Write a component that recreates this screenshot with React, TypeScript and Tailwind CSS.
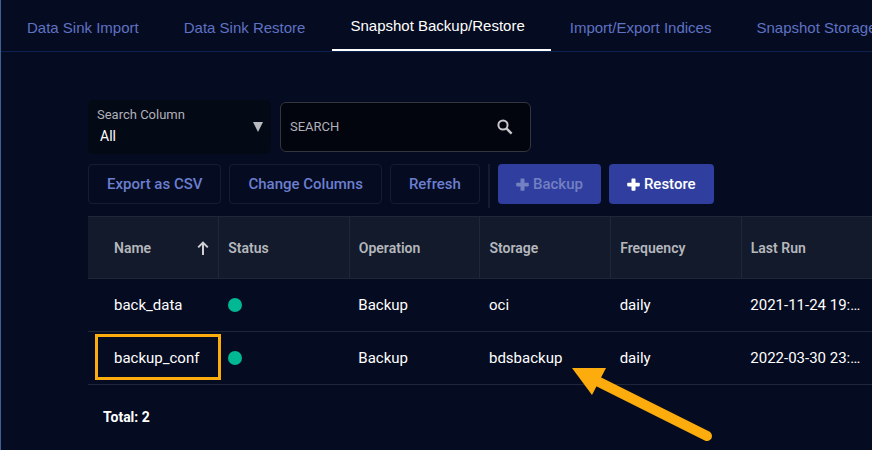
import { useState } from "react"

const tabs = [
    'Data Sink Import',
    'Data Sink Restore',
    'Snapshot Backup/Restore',
    'Import/Export Indices',
    'Snapshot Storage',
]

const columns = ['Name', 'Status', 'Operation', 'Storage', 'Frequency', 'Last Run']

const jobs = [
    { name: 'back_data', operation: 'Backup', storage: 'oci', frequency: 'daily', lastRun: '2021-11-24 19:30:00', marked: false },
    { name: 'backup_conf', operation: 'Backup', storage: 'bdsbackup', frequency: 'daily', lastRun: '2022-03-30 23:30:00', marked: true },
]

function PlusIcon() {
    return (
        <svg width="13" height="13" viewBox="0 0 13 13" fill="currentColor">
            <path d="M5.3 0.5 H7.7 Q8.5 0.5 8.5 1.3 V4.8 H12 Q12.8 4.8 12.8 5.6 V7.6 Q12.8 8.4 12 8.4 H8.5 V11.9 Q8.5 12.7 7.7 12.7 H5.3 Q4.5 12.7 4.5 11.9 V8.4 H1 Q0.2 8.4 0.2 7.6 V5.6 Q0.2 4.8 1 4.8 H4.5 V1.3 Q4.5 0.5 5.3 0.5 Z" />
        </svg>
    )
}

function SearchIcon() {
    return (
        <svg width="16" height="16" viewBox="0 0 16 16" fill="none" stroke="#c8c8cc" strokeWidth="2">
            <circle cx="6" cy="6" r="4.6" />
            <path d="M9.4 9.4 L14.6 14.6" strokeWidth="2.4" />
        </svg>
    )
}

function SortIcon() {
    return (
        <svg width="12" height="14" viewBox="0 0 12 14" fill="none" stroke="#d0d0d3" strokeWidth="2">
            <path d="M6 14 V2 M1.2 6.4 L6 1.6 L10.8 6.4" />
        </svg>
    )
}

function PointerArrow() {
    return (
        <svg className="pointer-events-none absolute top-9 left-[91px] z-10" width="144" height="76" viewBox="0 0 144 76" fill="none">
            <path d="M26 13 L136 68" stroke="#fcac0c" strokeWidth="10" strokeLinecap="round" />
            <path d="M1 0 H35 L21 27 Z" fill="#fcac0c" />
        </svg>
    )
}

export default function App() {
    const [activeTab, setActiveTab] = useState('Snapshot Backup/Restore')
    const [search, setSearch] = useState('')

    const outlineButton = 'h-10 rounded border border-[#161c33] px-[18px] text-[#6b7fd0] hover:bg-[#10162e]'
    const solidButton = 'flex h-10 items-center gap-1 rounded bg-[#303f9f] px-[18px]'

    return (
        <div className="min-h-screen overflow-x-clip border-l border-[#3f5f95] bg-[#050b20] font-['Roboto',sans-serif] text-white">
            <nav className="flex h-[52px] overflow-hidden border-b border-[#0d2150] pl-2 font-['Liberation_Sans',sans-serif] whitespace-nowrap">
                <div className="flex gap-px">
                    {tabs.map(t => (
                        <button
                            key={t}
                            type="button"
                            onClick={() => setActiveTab(t)}
                            className={`${activeTab === t ? 'border-b-[3px] border-white text-white' : 'text-[#5f72c4]'} h-[52px] shrink-0 pt-1 pr-[26px] pl-[18px] text-[15px]`}
                        >
                            {t}
                        </button>
                    ))}
                </div>
            </nav>

            <main className="pt-12 pl-[87px]">
                <div className="flex items-center gap-[9px]">
                    <div className="relative h-[54px] w-[183px] rounded-md bg-[#040916] pt-1">
                        <label htmlFor="column" className="block pl-[9px] text-[13px] leading-[22px] text-[#b0b1b8]">Search Column</label>
                        <select id="column" className="block w-full appearance-none bg-transparent pl-3 text-sm text-white outline-none">
                            <option>All</option>
                        </select>
                        <svg className="pointer-events-none absolute top-[22px] right-2" width="10" height="10" viewBox="0 0 10 10">
                            <path d="M0 0 H10 L5 10 Z" fill="#b9bac0" />
                        </svg>
                    </div>
                    <div className="flex h-[50px] w-[251px] items-center rounded-md border border-[#33353f] bg-[#02040e] pr-[17px] pl-[9px]">
                        <input
                            aria-label="Search"
                            placeholder="SEARCH"
                            value={search}
                            onChange={(e) => setSearch(e.target.value)}
                            className="min-w-0 flex-1 bg-transparent text-[13px] outline-none placeholder:text-[#b0b1b8]"
                        />
                        <SearchIcon />
                    </div>
                </div>

                <div className="mt-[10px] flex text-[15px] font-medium whitespace-nowrap">
                    <div className="flex gap-2">
                        <button type="button" className={outlineButton}>Export as CSV</button>
                        <button type="button" className={outlineButton}>Change Columns</button>
                        <button type="button" className={outlineButton}>Refresh</button>
                    </div>
                    <div className="mx-2 h-11 w-0.5 bg-[#161b2d]" />
                    <div className="flex gap-2">
                        <button type="button" disabled className={`${solidButton} text-[#7380c2]`}>
                            <PlusIcon />Backup
                        </button>
                        <button type="button" className={`${solidButton} text-white`}>
                            <PlusIcon />Restore
                        </button>
                    </div>
                </div>

                <table className="mt-2 w-full table-fixed border-collapse text-left">
                    <thead>
                        <tr className="h-[62px] border-y border-[#1f2638] bg-[#121a2b] text-sm text-[#b5b7bd]">
                            {columns.map((c, i) => (
                                <th key={c} className={`${i === 0 ? 'pl-[26px]' : 'border-l border-[#1f2638] pl-[9px]'} pr-[9px] font-semibold`}>
                                    <div className="flex items-center justify-between">
                                        {c}
                                        {i === 0 && <SortIcon />}
                                    </div>
                                </th>
                            ))}
                        </tr>
                    </thead>
                    <tbody className="text-[15px]">
                        {jobs.map(j => (
                            <tr key={j.name} className="h-[53px] border-b border-[#20263a]">
                                <td className="relative pl-[26px]">
                                    {j.name}
                                    {j.marked && <div className="absolute top-0.5 -right-0.5 bottom-1 left-[7px] border-3 border-[#fcac0c]" />}
                                </td>
                                <td className="pl-[9px]">
                                    <div className="size-3.5 rounded-full bg-[#00b894]" />
                                </td>
                                <td className="pl-[9px]">{j.operation}</td>
                                <td className="relative pl-[9px]">
                                    {j.storage}
                                    {j.marked && <PointerArrow />}
                                </td>
                                <td className="pl-[9px]">{j.frequency}</td>
                                <td className="pr-2 pl-[9px]">
                                    <div className="truncate">{j.lastRun}</div>
                                </td>
                            </tr>
                        ))}
                    </tbody>
                </table>

                <p className="mt-[22px] pl-[15px] text-sm font-bold">Total: 2</p>
            </main>
        </div>
    )
}
